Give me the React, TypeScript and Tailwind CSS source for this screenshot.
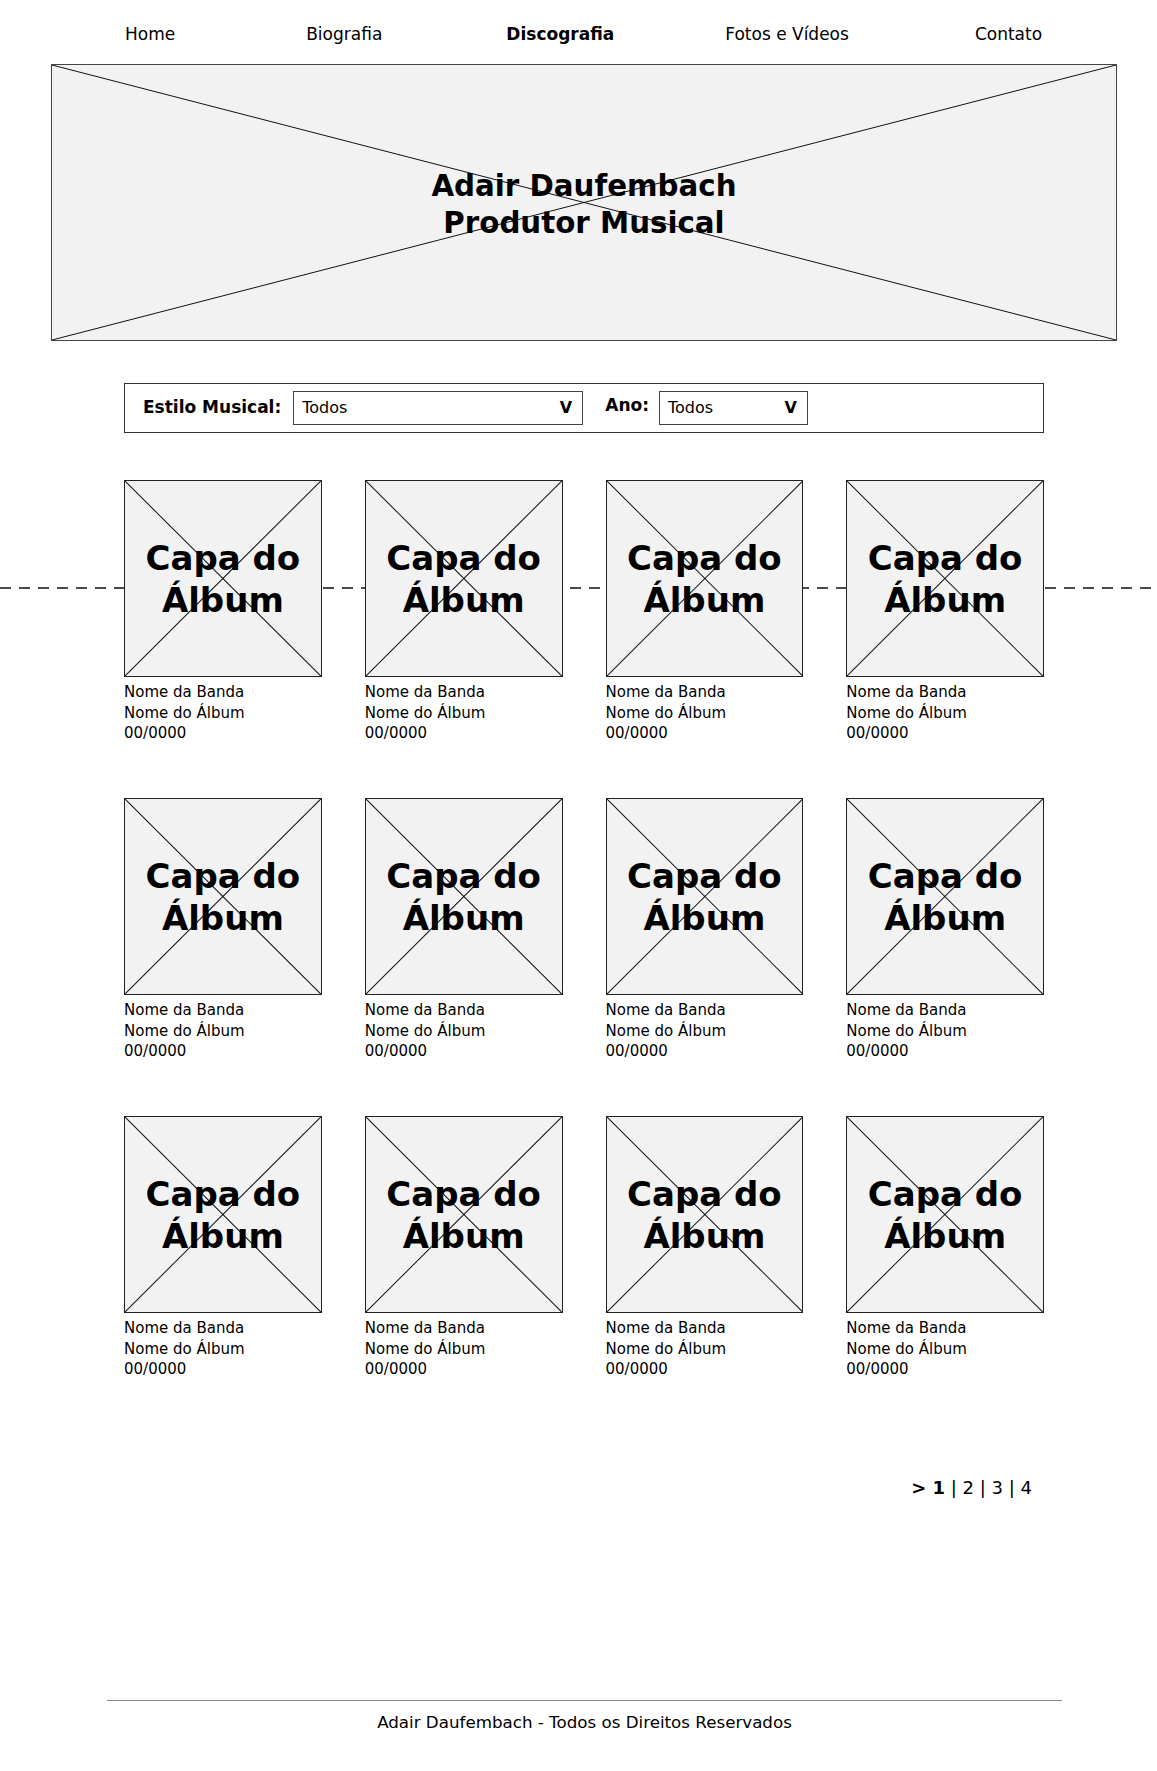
import React from 'react';

const NAV = [
  { label: 'Home', cls: 'ml-[125px]' },
  { label: 'Biografia', cls: 'ml-[131px]' },
  { label: 'Discografia', cls: 'ml-[124px] font-bold' },
  { label: 'Fotos e Vídeos', cls: 'ml-[111px]' },
  { label: 'Contato', cls: 'ml-[126px]' },
];

function Cross() {
  return (
    <svg className="absolute inset-0 h-full w-full" viewBox="0 0 100 100" preserveAspectRatio="none">
      <line x1="0" y1="0" x2="100" y2="100" stroke="#111" strokeWidth="1" vectorEffect="non-scaling-stroke" />
      <line x1="100" y1="0" x2="0" y2="100" stroke="#111" strokeWidth="1" vectorEffect="non-scaling-stroke" />
    </svg>
  );
}

function Select({ width }: { width: string }) {
  return (
    <div className={`flex h-[34px] ${width} items-center justify-between border border-[#444] bg-white pl-[8px] pr-[10px]`}>
      <span className="text-[16px]">Todos</span>
      <span className="text-[16px] font-bold">V</span>
    </div>
  );
}

function Album() {
  return (
    <div>
      <div className="relative z-10 flex h-[197px] items-center justify-center border border-[#222] bg-[#f2f2f2]">
        <Cross />
        <p className="relative text-center text-[34px] font-bold leading-[42px]">
          Capa do
          <br />
          Álbum
        </p>
      </div>
      <div className="mt-[5px] text-[15px] leading-[20.5px]">
        <p>Nome da Banda</p>
        <p>Nome do Álbum</p>
        <p>00/0000</p>
      </div>
    </div>
  );
}

export default function App() {
  const rows = [0, 1, 2];

  return (
    <div className="min-h-[1771px] w-full bg-white text-black" style={{ fontFamily: '"DejaVu Sans", Verdana, sans-serif' }}>
      <nav className="flex h-[64px] items-center pt-[5px] text-[17px]">
        {NAV.map((n) => (
          <span key={n.label} className={n.cls}>
            {n.label}
          </span>
        ))}
      </nav>

      <header className="relative ml-[51px] flex h-[277px] w-[1066px] items-center justify-center border border-[#444] bg-[#f2f2f2]">
        <Cross />
        <h1 className="relative mt-[4px] text-center text-[29.3px] font-bold leading-[37px]">
          Adair Daufembach
          <br />
          Produtor Musical
        </h1>
      </header>

      <div className="ml-[124px] mt-[42px] flex h-[50px] w-[920px] items-center border border-[#333] pl-[18px]">
        <span className="text-[17px] font-bold">Estilo Musical:</span>
        <div className="ml-[12px]">
          <Select width="w-[290px]" />
        </div>
        <span className="-mt-[4px] ml-[22px] text-[17px] font-bold">Ano:</span>
        <div className="ml-[10px]">
          <Select width="w-[149px]" />
        </div>
      </div>

      <div className="relative mt-[47px] w-full">
        <svg className="absolute left-0 top-[107px] h-[2px] w-full" preserveAspectRatio="none">
          <line x1="0" y1="1" x2="1157" y2="1" stroke="#111" strokeWidth="1.5" strokeDasharray="11 8" />
        </svg>
        <div className="ml-[124px] grid w-[920px] grid-cols-4 gap-x-[43px] gap-y-[54.5px]">
          {rows.flatMap((r) => [0, 1, 2, 3].map((c) => <Album key={`${r}-${c}`} />))}
        </div>
      </div>

      <div className="ml-[124px] mt-[95px] w-[920px] pr-[12px] text-right text-[18px] leading-[25px]">
        <span className="font-bold">&gt; 1</span> | 2 | 3 | 4
      </div>

      <footer className="ml-[107px] mt-[200px] w-[955px] text-center">
        <div className="h-px w-full bg-[#888]" />
        <p className="mt-[10px] text-[16.7px] leading-[23px]">Adair Daufembach - Todos os Direitos Reservados</p>
      </footer>
    </div>
  );
}
